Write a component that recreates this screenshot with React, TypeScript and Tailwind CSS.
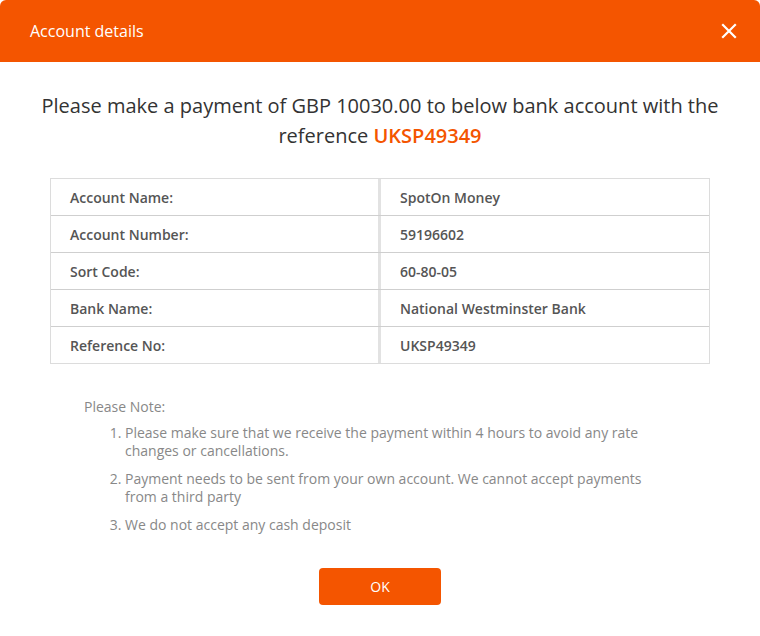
import type React from "react"

const rows: { label: string; value: string }[] = [
  { label: "Account Name:", value: "SpotOn Money" },
  { label: "Account Number:", value: "59196602" },
  { label: "Sort Code:", value: "60-80-05" },
  { label: "Bank Name:", value: "National Westminster Bank" },
  { label: "Reference No:", value: "UKSP49349" },
]

const notes = [
  "Please make sure that we receive the payment within 4 hours to avoid any rate changes or cancellations.",
  "Payment needs to be sent from your own account. We cannot accept payments from a third party",
  "We do not accept any cash deposit",
]

const App: React.FC = () => {
  return (
    <div className="w-[760px] h-[636px] bg-white font-['Open_Sans',sans-serif] text-[#333]">
      <div className="h-[62px] bg-[#f45500] rounded-t-[6px] flex items-center justify-between pl-[30px] pr-[23px]">
        <h1 className="text-white text-[16px]">Account details</h1>
        <button className="text-white w-[16px] h-[16px] flex items-center justify-center">
          <svg width="16" height="16" viewBox="0 0 16 16" fill="none" stroke="currentColor" strokeWidth="2.2" strokeLinecap="square">
            <path d="M2 2 L14 14 M14 2 L2 14" />
          </svg>
        </button>
      </div>

      <p className="pt-[29px] px-[30px] text-center text-[20px] leading-[30px] text-[#333]">
        Please make a payment of GBP 10030.00 to below bank account with the reference{" "}
        <span className="text-[#f45500] font-semibold">UKSP49349</span>
      </p>

      <div className="mx-[50px] mt-[27px] border border-[#dcdcdc]">
        {rows.map((row, i) => (
          <div key={row.label} className={`flex ${i > 0 ? "h-[37px] border-t border-[#cfcfcf]" : "h-[36px]"}`}>
            <div className="w-[330px] border-r-[3px] border-[#e2e2e2] pl-[19px] flex items-center text-[14px] font-semibold text-[#555]">
              {row.label}
            </div>
            <div className="flex-1 pl-[19px] flex items-center text-[14px] font-semibold text-[#555]">
              {row.value}
            </div>
          </div>
        ))}
      </div>

      <div className="mt-[34px] pl-[84px] pr-[100px] text-[14px] leading-[18px] text-[#888]">
        <p>Please Note:</p>
        <ol className="list-decimal pl-[41px] mt-[8px] space-y-[10px]">
          {notes.map((note) => (
            <li key={note}>{note}</li>
          ))}
        </ol>
      </div>

      <div className="flex justify-center mt-[34px]">
        <button className="w-[122px] h-[37px] rounded-[4px] bg-[#f45500] text-white text-[14px]">OK</button>
      </div>
    </div>
  )
}

export default App
